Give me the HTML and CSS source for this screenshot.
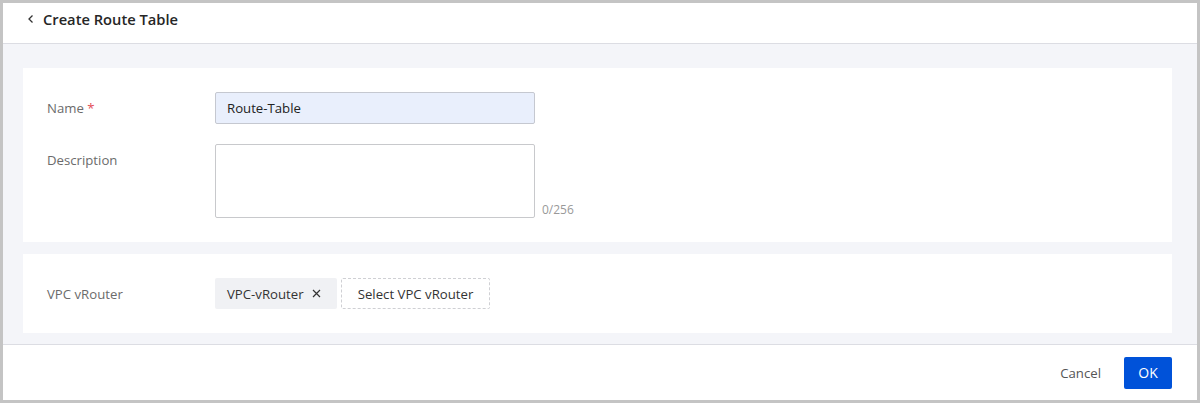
FILE: index.html
```html
<!DOCTYPE html>
<html>
<head>
<meta charset="utf-8">
<link rel="stylesheet" href="styles.css">
</head>
<body>
<div class="frame">
  <header class="header">
    <svg class="back" width="8" height="10" viewBox="0 0 8 10"><path d="M5.5 1.5 L2 5 L5.5 8.5" fill="none" stroke="#333" stroke-width="1.3"/></svg>
    <span class="title">Create Route Table</span>
  </header>
  <main class="body">
    <section class="card card-basic">
      <div class="row">
        <div class="label">Name <span class="req">*</span></div>
        <div class="input filled">Route-Table</div>
      </div>
      <div class="row row-desc">
        <div class="label label-top">Description</div>
        <div class="textarea"></div>
        <div class="counter">0/256</div>
      </div>
    </section>
    <section class="card card-vpc">
      <div class="row">
        <div class="label">VPC vRouter</div>
        <div class="tag">VPC-vRouter
          <svg class="x" width="9" height="9" viewBox="0 0 9 9"><path d="M1 1 L8 8 M8 1 L1 8" stroke="#333" stroke-width="1.2"/></svg>
        </div>
        <div class="select">Select VPC vRouter</div>
      </div>
    </section>
  </main>
  <footer class="footer">
    <span class="cancel">Cancel</span>
    <span class="ok">OK</span>
  </footer>
</div>
</body>
</html>
```

FILE: styles.css
```css
* { box-sizing: border-box; }
html, body { margin: 0; padding: 0; }
body {
  width: 1200px;
  height: 403px;
  background: #c4c4c4;
  padding: 3px;
  font-family: "Open Sans", "Noto Sans", sans-serif;
  font-size: 13.2px;
  color: #333;
}
.frame {
  width: 1194px;
  height: 397px;
  background: #fff;
  display: flex;
  flex-direction: column;
}
.header {
  height: 41px;
  border-bottom: 1px solid #dcdde3;
  display: flex;
  align-items: flex-start;
  padding: 6px 0 0 24px;
  gap: 8px;
}
.back { margin-top: 5px; }
.title {
  font-size: 14.7px;
  font-weight: 600;
  line-height: 20px;
  color: #262626;
}
.body {
  height: 301px;
  background: #f4f5f9;
  border-bottom: 1px solid #dcdde3;
  padding: 24px 25px 0 20px;
  display: flex;
  flex-direction: column;
  gap: 12px;
}
.card {
  background: #fff;
  padding: 24px 24px;
}
.card-basic { height: 174px; }
.card-vpc { height: 79px; }
.row {
  display: flex;
  align-items: center;
}
.row-desc {
  margin-top: 20px;
  align-items: flex-start;
}
.label {
  width: 168px;
  color: #6b6b6b;
}
.label-top { padding-top: 7px; }
.req { color: #e34d59; }
.input {
  width: 320px;
  height: 32px;
  border: 1px solid #c5c8d0;
  border-radius: 2px;
  display: flex;
  align-items: center;
  padding-left: 11px;
  color: #222;
}
.input.filled { background: #e9effc; }
.textarea {
  width: 320px;
  height: 74px;
  border: 1px solid #c8c9cc;
  border-radius: 2px;
}
.counter {
  align-self: flex-end;
  margin-left: 7px;
  font-size: 12px;
  color: #999;
  line-height: 16px;
}
.tag {
  height: 31px;
  width: 122px;
  background: #f0f1f4;
  border-radius: 2px;
  display: flex;
  align-items: center;
  padding-left: 12px;
  gap: 8px;
  color: #333;
}
.select {
  margin-left: 4px;
  height: 31px;
  width: 149px;
  border: 1px dashed #cfd0d4;
  border-radius: 2px;
  display: flex;
  align-items: center;
  justify-content: center;
  color: #333;
}
.footer {
  flex: 1;
  display: flex;
  align-items: center;
  justify-content: flex-end;
  padding-right: 25px;
  gap: 23px;
}
.cancel { color: #555; }
.ok {
  width: 48px;
  height: 32px;
  background: #0052d9;
  color: #fff;
  border-radius: 2px;
  display: flex;
  align-items: center;
  justify-content: center;
  font-size: 14px;
}
```
